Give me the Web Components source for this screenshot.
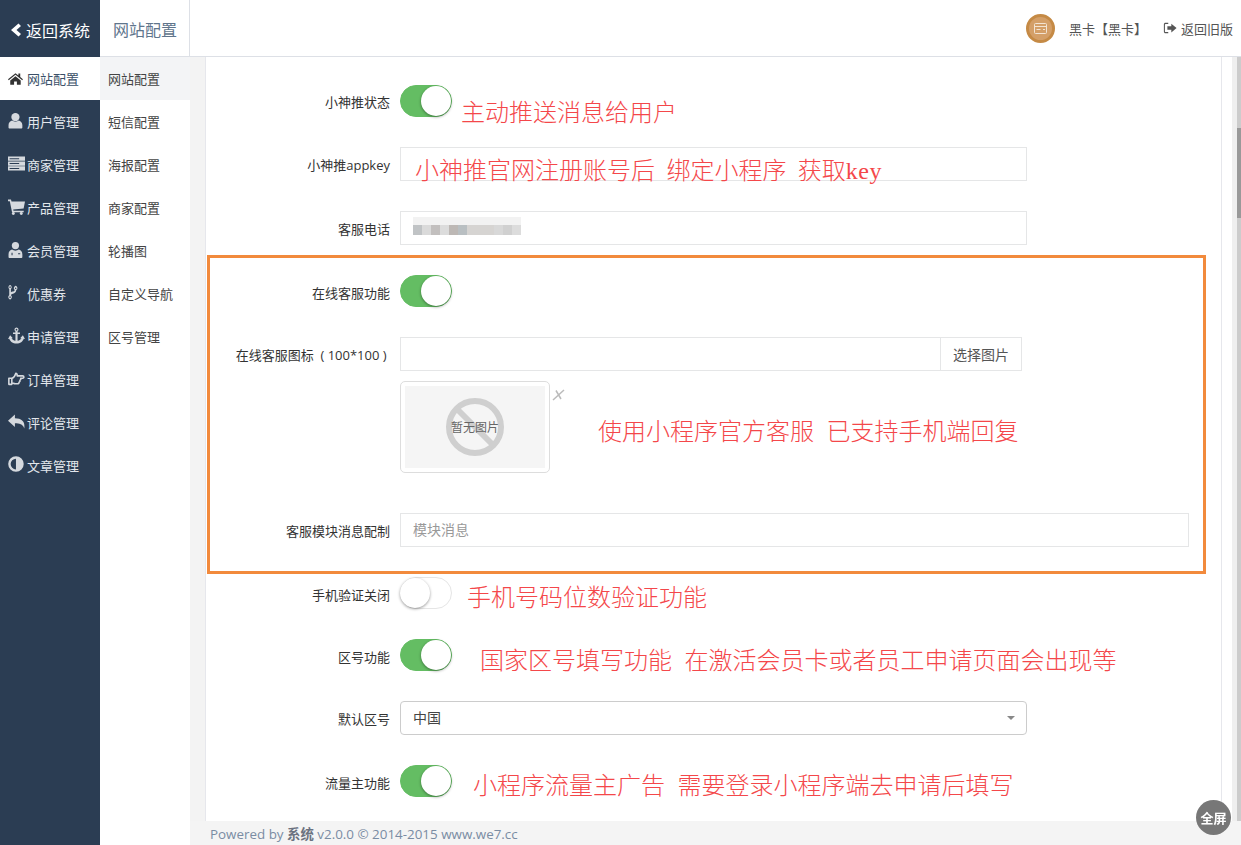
<!DOCTYPE html>
<html lang="zh">
<head>
<meta charset="utf-8">
<title>网站配置</title>
<style>
html, body { margin: 0; height: 845px; overflow: hidden; background: #fff; }
body { font: 13px "Open Sans", "Noto Sans CJK SC", sans-serif; color: #333; }
</style>
</head>
<body>

<admin-app>
    <side-nav slot="side">
        <nav-item icon="home" active>网站配置</nav-item>
        <nav-item icon="user">用户管理</nav-item>
        <nav-item icon="server">商家管理</nav-item>
        <nav-item icon="cart">产品管理</nav-item>
        <nav-item icon="doctor">会员管理</nav-item>
        <nav-item icon="fork">优惠券</nav-item>
        <nav-item icon="anchor">申请管理</nav-item>
        <nav-item icon="hand">订单管理</nav-item>
        <nav-item icon="reply">评论管理</nav-item>
        <nav-item icon="adjust">文章管理</nav-item>
    </side-nav>
    <top-bar slot="top" title="网站配置"></top-bar>
    <sub-nav slot="sub">
        <sub-item active>网站配置</sub-item>
        <sub-item>短信配置</sub-item>
        <sub-item>海报配置</sub-item>
        <sub-item>商家配置</sub-item>
        <sub-item>轮播图</sub-item>
        <sub-item>自定义导航</sub-item>
        <sub-item>区号管理</sub-item>
    </sub-nav>
    <config-panel slot="main">
        <form-row label="小神推状态" pad="8">
            <toggle-switch on></toggle-switch>
            <red-note style="margin:11px 0 -11px 9px">主动推送消息给用户</red-note>
        </form-row>
        <form-row label="小神推appkey">
            <text-field>
                <red-note style="position:absolute;left:14px;top:6px;word-spacing:.4px">小神推官网注册账号后&nbsp;&nbsp;绑定小程序&nbsp;&nbsp;获取<span style="font-family:'Liberation Serif',serif;letter-spacing:.5px">key</span></red-note>
            </text-field>
        </form-row>
        <form-row label="客服电话" gap="10">
            <text-field><blur-phone></blur-phone></text-field>
        </form-row>
        <note-box>
            <form-row label="在线客服功能">
                <toggle-switch on></toggle-switch>
            </form-row>
            <form-row label="在线客服图标&nbsp;&nbsp;(&nbsp;100*100&nbsp;)&nbsp;" gap="10">
                <text-field width="540" group></text-field>
                <pick-button>选择图片</pick-button>
            </form-row>
            <form-row gap="40">
                <no-image></no-image>
                <red-note style="margin:34px 0 -34px 48px">使用小程序官方客服&nbsp;&nbsp;已支持手机端回复</red-note>
            </form-row>
            <form-row label="客服模块消息配制" gap="0">
                <text-field width="789" placeholder="模块消息"></text-field>
            </form-row>
        </note-box>
        <form-row label="手机验证关闭" style="margin-top:3px">
            <toggle-switch></toggle-switch>
            <red-note style="margin:4px 0 -4px 15px">手机号码位数验证功能</red-note>
        </form-row>
        <form-row label="区号功能">
            <toggle-switch on></toggle-switch>
            <red-note style="margin:5px 0 -5px 28px">国家区号填写功能&nbsp;&nbsp;在激活会员卡或者员工申请页面会出现等</red-note>
        </form-row>
        <form-row label="默认区号">
            <select-box>中国</select-box>
        </form-row>
        <form-row label="流量主功能">
            <toggle-switch on></toggle-switch>
            <red-note style="margin:4px 0 -4px 21px">小程序流量主广告&nbsp;&nbsp;需要登录小程序端去申请后填写</red-note>
        </form-row>
    </config-panel>
    <page-footer slot="foot"></page-footer>
</admin-app>
<full-button></full-button>

<script>
// icons, roughly the font-awesome shapes, on a 16 box
var icons = {
    home: '<g transform="translate(0 2) scale(.88)"><path d="M8 2.200 0 8.800l.8 1L8 3.900l7.200 5.900.8-1-2.900-2.400V2.600h-2v2L8 2.200zM2.400 10v4.600h4.100v-3.500h3v3.500h4.100V10L8 5.400 2.400 10z"/></g>',
    user: '<circle cx="7" cy="4.800" r="3.900"/><path d="M.5 14.500v-2.200C.5 9.800 2.300 8.300 4 8c.8.700 1.900 1.100 3 1.100s2.200-.4 3-1.100c1.700.3 3.500 1.800 3.500 4.300v2.200c0 .5-.5 1-1 1h-11c-.5 0-1-.5-1-1z"/>',
    server: '<path d="M0 1.500h16v3.900H0zM0 6.100h16v3.900H0zM0 10.700h16v3.900H0z"/><path fill="#2b3d53" d="M1.500 3h9v.9h-9zM1.500 7.600h9v.9h-9zM1.500 12.200h9v.9h-9z"/>',
    cart: '<path d="M0 1.500h2.800l.5 1.800H16l-1.300 6.500-9.800 1 .3 1.200h9.600v1.400H3.800L1.700 3H0z"/><circle cx="5" cy="14.500" r="1.400"/><circle cx="12.500" cy="14.500" r="1.400"/>',
    doctor: '<circle cx="7" cy="4.300" r="3.400"/><path d="M.5 15v-2.500C.5 10 2.300 8.300 3.800 8.100 4.700 8.800 5.800 9.200 7 9.200s2.300-.4 3.200-1.100c1.500.2 3.300 1.900 3.300 4.400V15c0 .5-.5 1-1 1h-11c-.5 0-1-.5-1-1z"/><path fill="#2b3d53" d="M3.300 11h1v2.300h-1zM9.500 11.500h2v1h-2z"/>',
    fork: '<g transform="scale(.78 1) translate(-1.500 0)"><path fill-rule="evenodd" d="M4 1a2 2 0 0 1 1 3.700v3.100c.5-.4 1.200-.6 2-.7 1.500-.2 2.500-.6 2.700-1.500A2 2 0 1 1 11.500 5.700c-.2 2.300-2 3.100-4 3.400-1.300.2-2.300.6-2.500 1.500a2 2 0 1 1-2 0V4.700A2 2 0 0 1 4 1zm0 1.200a.8.8 0 1 0 0 1.600.8.800 0 0 0 0-1.600zm6.800 1a.8.8 0 1 0 0 1.600.8.800 0 0 0 0-1.600zM4 11.600a.8.800 0 1 0 0 1.600.8.800 0 0 0 0-1.600z"/></g>',
    anchor: '<path fill-rule="evenodd" d="M8 .5a2 2 0 0 1 1 3.700v1h2.300v1.500H9V13c1.800-.2 3.200-1.200 3.700-2.300l-1.300-.2L14 7.800l2 3.500-1.200-.3C14 13.500 11.500 15.500 8 15.500S2 13.500 1.200 11L0 11.300l2-3.500 2.600 2.700-1.300.2C3.800 11.800 5.200 12.800 7 13V6.700H4.700V5.200H7v-1A2 2 0 0 1 8 .5zm0 1.200a.8.800 0 1 0 0 1.600.8.800 0 0 0 0-1.600z"/>',
    hand: '<path fill="none" stroke="currentColor" stroke-width="1.500" stroke-linejoin="round" d="M.8 7.700h2.800V13.500H.8zM3.600 8c1.600-.5 3-2.200 3.700-4.800.9 0 1.500.7 1.300 2.300h5.200c1.500 0 1.500 2.200.1 2.200h-2c.5 1 0 1.700-.7 1.900.3 1 0 1.600-.8 1.900.1 1-.6 1.500-1.500 1.500H7c-1.400 0-2.300-.6-3.400-.8"/>',
    reply: '<path d="M6.500 1.500 0 7.300l6.500 5.800V9.700c4.200 0 7.300.6 8.800 4.800.9-6-1.800-9.300-8.800-9.500z"/>',
    adjust: '<path fill-rule="evenodd" d="M7.500 .3a7.300 7.300 0 1 1 0 14.600A7.300 7.300 0 0 1 7.500 .3zm0 2.300a5 5 0 0 0 0 10z"/>',
    out: '<path d="M6 2H2.800C1.800 2 1 2.800 1 3.800v8.400c0 1 .8 1.800 1.800 1.800H6v-1.300H3c-.5 0-.8-.3-.8-.8V4.100c0-.5.3-.8.8-.8h3z"/><path d="M9.500 3 15.500 8l-6 5V10H5V6h4.500z"/>'
};
function icon(name, size) {
    return '<svg width="' + size + '" height="' + size + '" viewBox="0 0 16 16" fill="currentColor">' + icons[name] + '</svg>';
}

function def(name, html) {
    var t = document.createElement('template');
    t.innerHTML = html;
    customElements.define(name, class extends HTMLElement {
        constructor() {
            super();
            this.attachShadow({ mode: 'open' }).appendChild(t.content.cloneNode(true));
        }
    });
}

def('admin-app', `
    <style>
    :host { display: grid; grid-template-columns: 100px 90px 1fr; grid-template-rows: 57px 1fr 24px; height: 845px; position: relative; overflow: hidden; }
    .side { grid-column: 1; grid-row: 1 / 4; }
    .top { grid-column: 2 / 4; grid-row: 1; }
    .sub { grid-column: 2; grid-row: 2 / 4; }
    .main { grid-column: 3; grid-row: 2; min-height: 0; overflow: hidden; }
    .foot { grid-column: 3; grid-row: 3; }
    </style>
    <div class="side"><slot name="side"></slot></div>
    <div class="top"><slot name="top"></slot></div>
    <div class="sub"><slot name="sub"></slot></div>
    <div class="main"><slot name="main"></slot></div>
    <div class="foot"><slot name="foot"></slot></div>
`);

def('side-nav', `
    <style>
    :host { display: block; height: 845px; background: #2b3d53; color: #d9dfe6; }
    .back { height: 57px; box-sizing: border-box; padding: 2px 0 0 8px; display: flex; align-items: center; gap: 2px; font-size: 16px; color: #fff; }
    svg { display: block; }
    </style>
    <div class="back">
        <svg width="16" height="16" viewBox="0 0 16 16" fill="currentColor"><path d="M10.500 1.500 13 4 8.500 8 13 12 10.500 14.500 3 8z"/></svg>
        <span>返回系统</span>
    </div>
    <slot></slot>
`);

customElements.define('nav-item', class extends HTMLElement {
    constructor() {
        super();
        this.attachShadow({ mode: 'open' }).innerHTML = `
            <style>
            :host { display: flex; align-items: center; height: 43px; padding: 0 0 1px 8px; box-sizing: border-box; font-size: 13px; color: #e3e7ec; }
            :host([active]) { background: #fff; color: #3b5068; }
            i { width: 19px; height: 17px; margin: -2px 0 0 0; display: block; color: #d5d9de; }
            svg { display: block; }
            :host([active]) i { color: #333; }
            </style>
            <i>${icon(this.getAttribute('icon'), 17)}</i><slot></slot>`;
    }
});

customElements.define('top-bar', class extends HTMLElement {
    constructor() {
        super();
        this.attachShadow({ mode: 'open' }).innerHTML = `
            <style>
            :host { display: flex; align-items: center; height: 57px; box-sizing: border-box; border-bottom: 1px solid #dde0e6; background: #fff; }
            .title { width: 90px; height: 56px; box-sizing: border-box; display: flex; align-items: center; padding: 2px 0 0 13px; font-size: 16px; color: #60758c; border-right: 1px solid #dde0e6; }
            .right { margin-left: auto; display: flex; align-items: center; font-size: 13px; color: #555; padding-right: 8px; }
            .avatar { width: 29px; height: 29px; margin: 1px 14px 0 0; border-radius: 50%; background: #d49f68; border: 3px solid #c58a45; box-sizing: border-box; display: flex; align-items: center; justify-content: center; }
            .user { margin-right: 16px; }
            .old { display: flex; align-items: center; gap: 4px; }
            .old svg { color: #555; display: block; }
            </style>
            <div class="title">${this.getAttribute('title')}</div>
            <div class="right">
                <div class="avatar">
                    <svg width="13" height="11" viewBox="0 0 13 11" fill="none" stroke="#f3e4d3"><rect x=".5" y=".5" width="12" height="10" rx="1"/><path d="M1 3.500h11M2.500 6.500h4M9 6.500h2"/></svg>
                </div>
                <span class="user">黑卡【黑卡】</span>
                <span class="old">${icon('out', 14)}<span>返回旧版</span></span>
            </div>`;
    }
});

def('sub-nav', `
    <style>
    :host { display: block; background: #fff; height: 100%; }
    </style>
    <slot></slot>
`);

def('sub-item', `
    <style>
    :host { display: flex; align-items: center; height: 43px; padding-left: 8px; font-size: 13px; color: #444; }
    :host([active]) { background: #f3f4f6; }
    </style>
    <slot></slot>
`);

def('config-panel', `
    <style>
    :host { display: flex; height: 764px; background: #f3f3f3; }
    .panel { margin-left: 15px; width: 1017px; box-sizing: border-box; background: #fff; border: solid #e6e7ec; border-width: 0 1px; padding-top: 28px; overflow: hidden; }
    .gap { width: 10px; background: #fff; }
    .bar { width: 9px; display: flex; background: #efefef; }
    .bar b { margin-left: 5px; width: 4px; background: #ccc; position: relative; display: block; }
    .bar b::after { content: ""; position: absolute; left: 0; top: 71px; width: 4px; height: 90px; background: #999; }
    </style>
    <div class="panel"><slot></slot></div>
    <div class="gap"></div>
    <div class="bar"><b></b></div>
`);

customElements.define('form-row', class extends HTMLElement {
    constructor() {
        super();
        var label = this.getAttribute('label') || '';
        var gap = this.getAttribute('gap');
        var pad = this.getAttribute('pad') || 9;
        this.attachShadow({ mode: 'open' }).innerHTML = `
            <style>
            :host { display: flex; align-items: flex-start; margin-bottom: ${gap === null ? 30 : gap}px; }
            .label { width: 184px; flex: none; margin-right: 10px; padding-top: ${pad}px; text-align: right; line-height: 18px; font-size: 13px; color: #333; white-space: nowrap; }
            :host-context(note-box) .label { width: 180px; }
            </style>
            <div class="label">${label}</div><slot></slot>`;
    }
});

def('note-box', `
    <style>
    :host { display: block; margin-left: 1px; width: 999px; height: 319px; box-sizing: border-box; border: 3px solid #f28a3c; padding-top: 17px; }
    </style>
    <slot></slot>
`);

def('toggle-switch', `
    <style>
    :host { display: block; flex: none; width: 52px; height: 32px; box-sizing: border-box; border-radius: 16px; border: 1px solid #e5e5e5; background: #fff; position: relative; }
    :host([on]) { background: #64bd63; border-color: #64bd63; }
    i { position: absolute; left: -1px; top: 0; width: 30px; height: 30px; border-radius: 50%; background: #fff; box-shadow: 0 1px 3px rgba(0,0,0,.4); }
    :host([on]) i { left: 20px; }
    </style>
    <i></i>
`);

customElements.define('text-field', class extends HTMLElement {
    constructor() {
        super();
        var w = this.getAttribute('width') || 627;
        var ph = this.getAttribute('placeholder') || '';
        this.attachShadow({ mode: 'open' }).innerHTML = `
            <style>
            :host { display: flex; align-items: center; flex: none; position: relative; width: ${w}px; height: 34px; box-sizing: border-box; border: 1px solid #e5e6e7; padding: 0 0 2px 12px; font-size: 14px; color: #999; background: #fff; }
            :host([group]) { border-right: 0; }
            </style>
            ${ph}<slot></slot>`;
    }
});

def('pick-button', `
    <style>
    :host { display: flex; align-items: center; justify-content: center; width: 82px; height: 34px; box-sizing: border-box; border: 1px solid #e5e6e7; font-size: 14px; color: #555; background: #fff; }
    </style>
    <slot></slot>
`);

def('blur-phone', `
    <style>
    :host { display: block; filter: blur(.7px); margin-top: -2px; }
    div { display: flex; }
    span { display: block; width: 9px; height: 10px; }
    .up span { height: 8px; background: #f2f2f2; }
    </style>
    <div class="up"><span style="width:108px"></span></div>
    <div>
        <span style="background:#c0c3c5"></span><span style="background:#dadada"></span>
        <span style="background:#c2bfbe"></span><span style="background:#dcdcdc"></span>
        <span style="background:#bdb8b5"></span><span style="background:#b9bfc2"></span>
        <span style="width:27px;background:#d6d4d2"></span><span style="background:#d8d8d8"></span>
        <span style="background:#d0d0d0"></span><span style="background:#dcdcdc"></span>
    </div>
`);

def('no-image', `
    <style>
    :host { display: block; position: relative; flex: none; width: 150px; height: 92px; box-sizing: border-box; border: 1px solid #ddd; border-radius: 5px; padding: 4px; background: #fff; }
    .pic { height: 82px; width: 140px; background: #f5f5f5; position: relative; display: flex; align-items: center; justify-content: center; font-size: 12px; color: #666; }
    .pic svg { position: absolute; left: 40px; top: 11px; }
    .pic span { position: relative; }
    .x { position: absolute; left: 151px; top: 6px; display: block; }
    </style>
    <div class="pic">
        <svg width="60" height="60" viewBox="0 0 60 60" fill="none" stroke="#cfcfcf" stroke-width="6"><circle cx="30" cy="30" r="26"/><path d="M11 11 49 49"/></svg>
        <span>暂无图片</span>
    </div>
    <svg class="x" width="13" height="13" viewBox="0 0 13 13" fill="none" stroke="#bbb" stroke-width="1.500"><path d="M1 12 12 2M4 2.500 9 11"/></svg>
`);

def('select-box', `
    <style>
    :host { display: flex; align-items: center; position: relative; width: 627px; height: 34px; box-sizing: border-box; border: 1px solid #ccc; border-radius: 4px; padding: 0 0 2px 12px; font-size: 14px; color: #444; background: #fff; }
    i { position: absolute; right: 11px; top: 14px; border: 4px solid transparent; border-top-color: #888; border-bottom: 0; }
    </style>
    <slot></slot><i></i>
`);

def('red-note', `
    <style>
    :host { display: block; font: 300 24px/30px "Noto Sans CJK SC", sans-serif; color: #f4474a; white-space: nowrap; word-spacing: 1px; }
    </style>
    <slot></slot>
`);

def('page-footer', `
    <style>
    :host { display: flex; align-items: center; height: 24px; padding-left: 20px; background: #f4f4f4; font-size: 13.400px; color: #7a8ca3; }
    b { color: #6b7280; }
    </style>
    <span>Powered by <b>系统</b> v2.0.0 © 2014-2015 www.we7.cc</span>
`);

def('full-button', `
    <style>
    :host { position: fixed; left: 1196px; top: 800px; width: 35px; height: 35px; border-radius: 50%; background: #777; color: #fff; font-size: 13px; font-weight: 700; display: flex; align-items: center; justify-content: center; }
    </style>
    全屏
`);
</script>
</body>
</html>
